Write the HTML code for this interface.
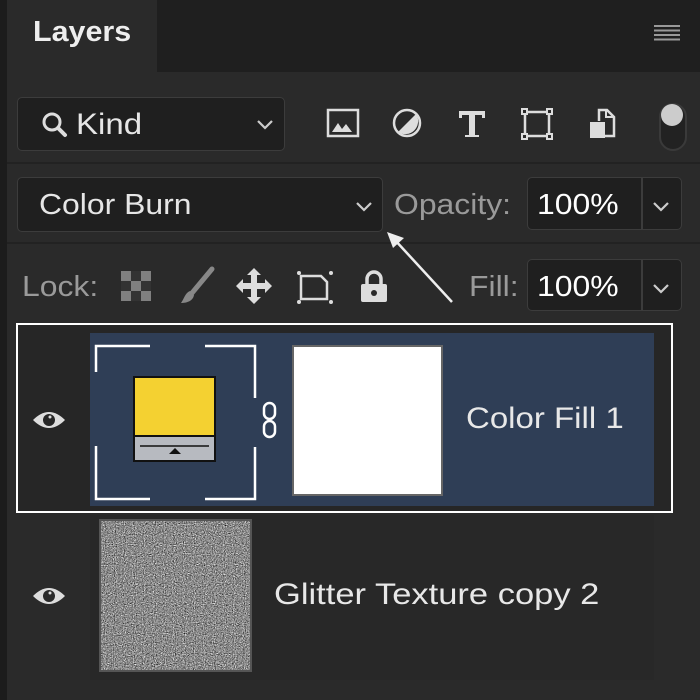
<!DOCTYPE html>
<html><head><meta charset="utf-8"><style>
*{margin:0;padding:0;box-sizing:border-box}
body{width:700px;height:700px;background:#2a2a2a;position:relative;overflow:hidden;font-family:"Liberation Sans",sans-serif;color:#e6e6e6}
.a{position:absolute}
.box{position:absolute;background:#1f1f1f;border:1.5px solid #3c3c3c;border-radius:5px}
.t{position:absolute;white-space:nowrap;line-height:1;transform:scaleX(1.1);transform-origin:0 50%}
</style></head><body>
<div class="a" style="left:0;top:0;width:7px;height:700px;background:#1c1c1c"></div>
<div class="a" style="left:157px;top:0;width:543px;height:72px;background:#1f1f1f"></div>
<div class="t" style="left:33px;top:18px;font-size:29px;font-weight:bold;color:#eee;transform:scaleX(1.05)">Layers</div>
<div class="a" style="left:654px;top:25px;width:26px;height:16px;background:repeating-linear-gradient(#999 0 2px,transparent 2px 4.5px)"></div>
<div class="a" style="left:7px;top:162px;width:693px;height:2px;background:#222"></div>
<div class="a" style="left:7px;top:242px;width:693px;height:2px;background:#222"></div>

<div class="box" style="left:17px;top:97px;width:268px;height:54px"></div>
<svg class="a" style="left:40px;top:110px" width="30" height="30" viewBox="0 0 30 30"><circle cx="12" cy="12" r="8" fill="none" stroke="#ddd" stroke-width="3"/><path d="M18 18l7 7" stroke="#ddd" stroke-width="4" stroke-linecap="round"/></svg>
<div class="t" style="left:76px;top:110px;font-size:30px">Kind</div>
<svg class="a" style="left:256px;top:119px" width="18" height="12"><path d="M2 2l7 7 7-7" fill="none" stroke="#ccc" stroke-width="2.2"/></svg>

<svg class="a" style="left:320px;top:100px" width="380" height="60" viewBox="320 100 380 60">
<rect x="328" y="110" width="30" height="26" fill="none" stroke="#ddd" stroke-width="2.5"/><path d="M332 132l6-9 4 6 4-5 6 8z" fill="#ddd"/>
<circle cx="407" cy="123" r="13" fill="none" stroke="#ddd" stroke-width="2.5"/><path d="M416 114a13 13 0 0 1-18 18z" fill="#ddd"/>
<path d="M459 111h26v7h-3v-3h-7v20h4v2h-14v-2h4v-20h-7v3h-3z" fill="#ddd"/>
<rect x="525" y="112" width="24" height="24" fill="none" stroke="#ddd" stroke-width="2.5"/><g fill="#2a2a2a" stroke="#ddd" stroke-width="2"><rect x="522" y="109" width="5" height="5"/><rect x="547" y="109" width="5" height="5"/><rect x="522" y="134" width="5" height="5"/><rect x="547" y="134" width="5" height="5"/></g>
<path d="M599 121v-11h8l7 7v19h-9" fill="none" stroke="#ddd" stroke-width="2.5"/><path d="M606 110v7h7" fill="none" stroke="#ddd" stroke-width="2"/><rect x="590" y="122" width="15" height="16" fill="#ddd"/>
<rect x="660" y="104" width="26" height="46" rx="13" fill="#222" stroke="#3a3a3a" stroke-width="2"/><circle cx="672" cy="115" r="11" fill="#ccc"/>
</svg>

<div class="box" style="left:17px;top:177px;width:366px;height:55px"></div>
<div class="t" style="left:39px;top:191px;font-size:29px">Color Burn</div>
<svg class="a" style="left:355px;top:201px" width="18" height="12"><path d="M2 2l7 7 7-7" fill="none" stroke="#ccc" stroke-width="2.2"/></svg>
<div class="t" style="left:394px;top:191px;font-size:29px;color:#9a9a9a">Opacity:</div>
<div class="box" style="left:527px;top:177px;width:155px;height:53px"></div>
<div class="a" style="left:641px;top:178px;width:1.5px;height:51px;background:#3c3c3c"></div>
<div class="t" style="left:537px;top:191px;font-size:29px;color:#fff">100%</div>
<svg class="a" style="left:652px;top:201px" width="18" height="12"><path d="M2 2l7 7 7-7" fill="none" stroke="#ccc" stroke-width="2.2"/></svg>

<div class="t" style="left:22px;top:273px;font-size:29px;color:#9a9a9a">Lock:</div>
<svg class="a" style="left:115px;top:225px" width="350" height="90" viewBox="115 225 350 90">
<rect x="121" y="271" width="30" height="30" fill="#808080"/><g fill="#333"><rect x="131" y="271" width="10" height="10"/><rect x="121" y="281" width="10" height="10"/><rect x="141" y="281" width="10" height="10"/><rect x="131" y="291" width="10" height="10"/></g>
<path d="M212 269l-20 24" stroke="#888" stroke-width="5" stroke-linecap="round"/><path d="M190 291c-5 2-6 8-9 12 6 0 12-2 13-8z" fill="#888"/>
<path d="M254 268l7 7h-4v8h8v-4l7 7-7 7v-4h-8v8h4l-7 7-7-7h4v-8h-8v4l-7-7 7-7v4h8v-8h-4z" fill="#ddd"/>
<path d="M301 276h20l6 6v17h-26z" fill="none" stroke="#ddd" stroke-width="2.5"/><g fill="#ddd"><circle cx="299" cy="273" r="2"/><circle cx="331" cy="273" r="2"/><circle cx="299" cy="302" r="2"/><circle cx="331" cy="302" r="2"/></g>
<path d="M367 285v-6a7 7 0 0 1 14 0v6" fill="none" stroke="#ddd" stroke-width="3.5"/><rect x="361" y="284" width="26" height="18" rx="2" fill="#ddd"/><circle cx="374" cy="293" r="3" fill="#2a2a2a"/>
<path d="M452 302l-58-63" stroke="#eee" stroke-width="2.5"/><path d="M387 232l17 6-11 10z" fill="#eee"/>
</svg>
<div class="t" style="left:469px;top:273px;font-size:29px;color:#9a9a9a">Fill:</div>
<div class="box" style="left:527px;top:259px;width:155px;height:52px"></div>
<div class="a" style="left:641px;top:260px;width:1.5px;height:50px;background:#3c3c3c"></div>
<div class="t" style="left:537px;top:273px;font-size:29px;color:#fff">100%</div>
<svg class="a" style="left:652px;top:283px" width="18" height="12"><path d="M2 2l7 7 7-7" fill="none" stroke="#ccc" stroke-width="2.2"/></svg>

<div class="a" style="left:16px;top:323px;width:657px;height:190px;border:2.5px solid #fff;background:#262626"></div>
<div class="a" style="left:90px;top:333px;width:564px;height:173px;background:#2f3e56"></div>
<svg class="a" style="left:0;top:320px" width="700" height="380" viewBox="0 320 700 380">
<g fill="none" stroke="#fff" stroke-width="2.5"><path d="M96 372v-26h54M205 346h50v52M96 446v53h54M205 499h50v-52"/></g>
<rect x="133" y="376" width="83" height="86" fill="#111"/><rect x="135" y="378" width="79" height="57" fill="#f4d131"/><rect x="135" y="437" width="79" height="23" fill="#b7bac0"/><path d="M140 446h69" stroke="#111" stroke-width="1.5"/><path d="M169 454l6-6 6 6z" fill="#111"/>
<g fill="none" stroke="#fff" stroke-width="2.5"><rect x="264" y="403" width="11" height="16" rx="5.5"/><rect x="264" y="421" width="11" height="16" rx="5.5"/></g>
<rect x="293" y="346" width="149" height="149" fill="#fff" stroke="#666" stroke-width="2"/>
<path d="M33 420q16-16 32 0q-16 16-32 0z" fill="#ddd"/><circle cx="49" cy="420" r="6" fill="#262626"/><circle cx="50" cy="417" r="1.5" fill="#ddd"/>
<rect x="90" y="515" width="564" height="165" fill="#282828"/>
<path d="M33 596q16-16 32 0q-16 16-32 0z" fill="#ddd"/><circle cx="49" cy="596" r="6" fill="#2a2a2a"/><circle cx="50" cy="593" r="1.5" fill="#ddd"/>
<filter id="n" x="0" y="0" width="1" height="1" color-interpolation-filters="sRGB"><feTurbulence type="fractalNoise" baseFrequency="0.9" numOctaves="2" seed="3"/><feColorMatrix type="matrix" values="0.33 0.33 0.33 0 0  0.33 0.33 0.33 0 0  0.33 0.33 0.33 0 0  0 0 0 0 1"/><feComponentTransfer><feFuncR type="linear" slope="2.2" intercept="-0.55"/><feFuncG type="linear" slope="2.2" intercept="-0.55"/><feFuncB type="linear" slope="2.2" intercept="-0.55"/></feComponentTransfer></filter>
<rect x="100" y="520" width="151" height="151" fill="#999" stroke="#555" stroke-width="2"/><rect x="101" y="521" width="149" height="149" filter="url(#n)"/>
</svg>
<div class="t" style="left:466px;top:404px;font-size:30px;color:#e8e8e8">Color Fill 1</div>
<div class="t" style="left:274px;top:580px;font-size:30px;color:#e8e8e8;transform:scaleX(1.15)">Glitter Texture copy 2</div>
</body></html>
